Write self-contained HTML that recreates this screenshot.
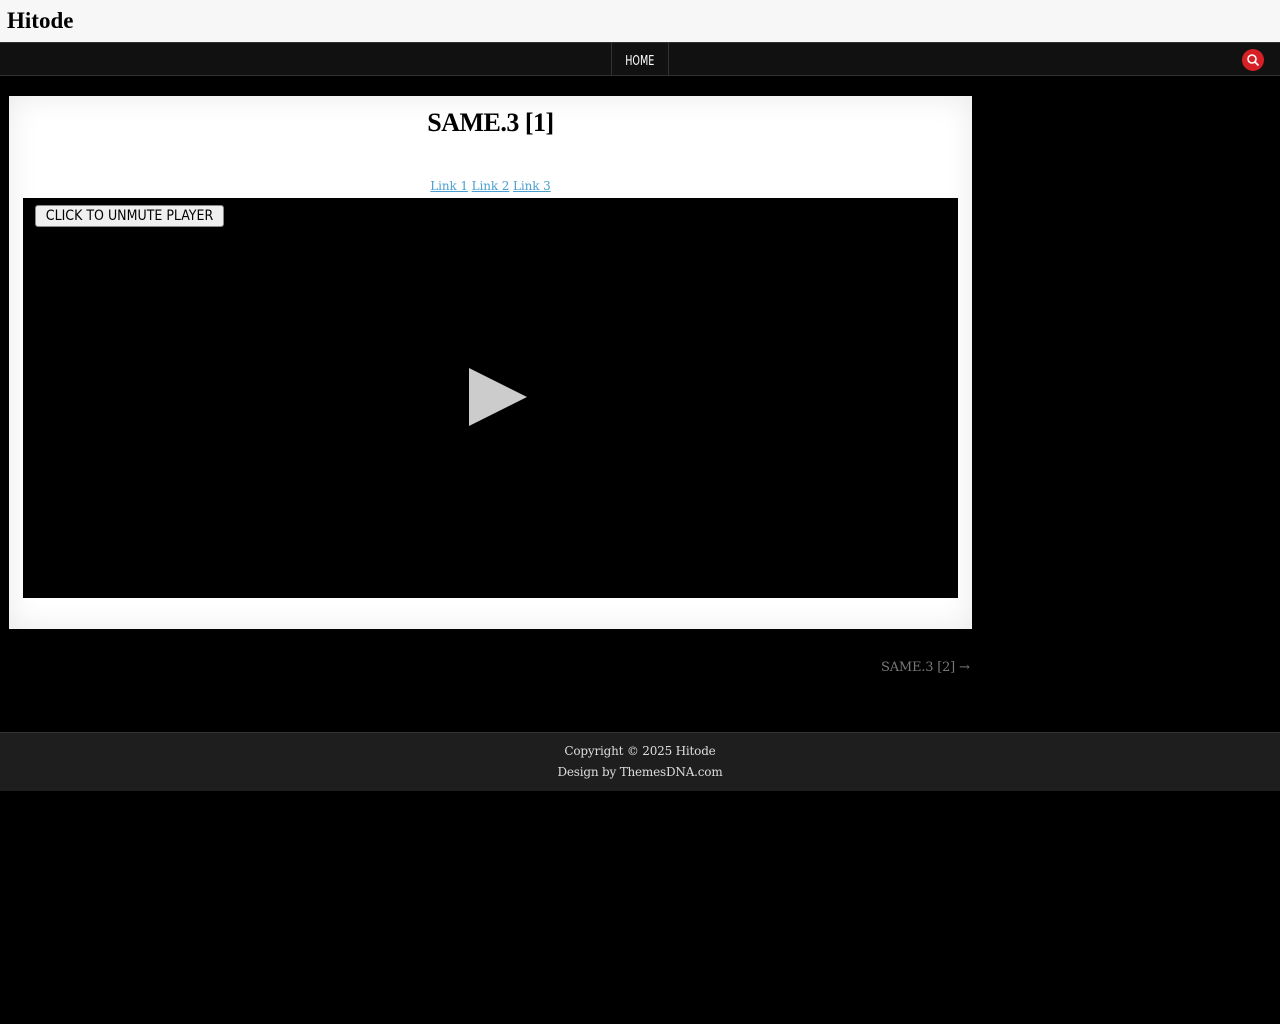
<!DOCTYPE html>
<html><head><meta charset="utf-8"><style>
body{margin:0;background:#000;font-family:"DejaVu Serif","Liberation Serif",serif;width:1280px;height:1024px;overflow:hidden;position:relative}
.hdr{position:absolute;left:0;top:0;width:1280px;height:42px;background:#f7f7f7}
.hdr b{position:absolute;left:7px;top:8px;font:bold 23px "Liberation Serif",serif;color:#000;transform:scaleX(1.0);transform-origin:left}
.nav{position:absolute;left:0;top:42px;width:1280px;height:32px;background:#111;border-top:1px solid #333;border-bottom:1px solid #333}
.home{position:absolute;left:611px;top:0;width:56px;height:32px;border-left:1px solid #333;border-right:1px solid #333;color:#fff;text-align:center;line-height:34px}
.home span{display:inline-block;font:13px "DejaVu Sans Condensed","Liberation Sans Narrow",sans-serif;transform:scaleX(.82)}
.srch{position:absolute;left:1242px;top:6px;width:22px;height:22px;border-radius:50%;background:#d71f26}
.card{position:absolute;left:9px;top:96px;width:963px;height:533px;background:#fff;box-shadow:inset 0 0 30px rgba(0,0,0,.09)}
h1{position:absolute;left:0;width:963px;top:12px;margin:0;text-align:center;font:bold 26px "Liberation Serif",serif;color:#000;letter-spacing:-0.5px}
.links{position:absolute;left:0;width:963px;top:83px;text-align:center;font-size:12px;letter-spacing:-0.1px}
.links a{color:#4a9fd0}
.vid{position:absolute;left:14px;top:102px;width:935px;height:400px;background:#000}
.btn{position:absolute;left:12px;top:7px;width:189px;height:22px;box-sizing:border-box;background:#efefef;border:1px solid #888;border-radius:3px;font:14px "DejaVu Sans Condensed","Liberation Sans",sans-serif;color:#000;text-align:center;line-height:20px}
.play{position:absolute;left:446px;top:170px;width:0;height:0;border-left:58px solid #ccc;border-top:29px solid transparent;border-bottom:29px solid transparent}
.next{position:absolute;left:881px;top:660px;color:#777;font-size:13px;letter-spacing:-0.2px}
.foot{position:absolute;left:0;top:732px;width:1280px;height:59px;background:#1e1e1e;border-top:1px solid #333;color:#ddd;font-size:12px;letter-spacing:-0.2px;text-align:center;line-height:21px;padding-top:8px;box-sizing:border-box}
</style></head><body>
<div class="hdr"><b>Hitode</b></div>
<div class="nav"><div class="home"><span>HOME</span></div>
<div class="srch"><svg width="22" height="22"><circle cx="10" cy="10" r="4" stroke="#fff" stroke-width="1.6" fill="none"/><path d="M13 13l3.5 3.5" stroke="#fff" stroke-width="1.8"/></svg></div></div>
<div class="card"><h1>SAME.3 [1]</h1>
<div class="links"><a href="#">Link 1</a> <a href="#">Link 2</a> <a href="#">Link 3</a></div>
<div class="vid"><div class="btn">CLICK TO UNMUTE PLAYER</div><div class="play"></div></div></div>
<div class="next">SAME.3 [2] →</div>
<div class="foot">Copyright © 2025 Hitode<br>Design by ThemesDNA.com</div>
</body></html>
